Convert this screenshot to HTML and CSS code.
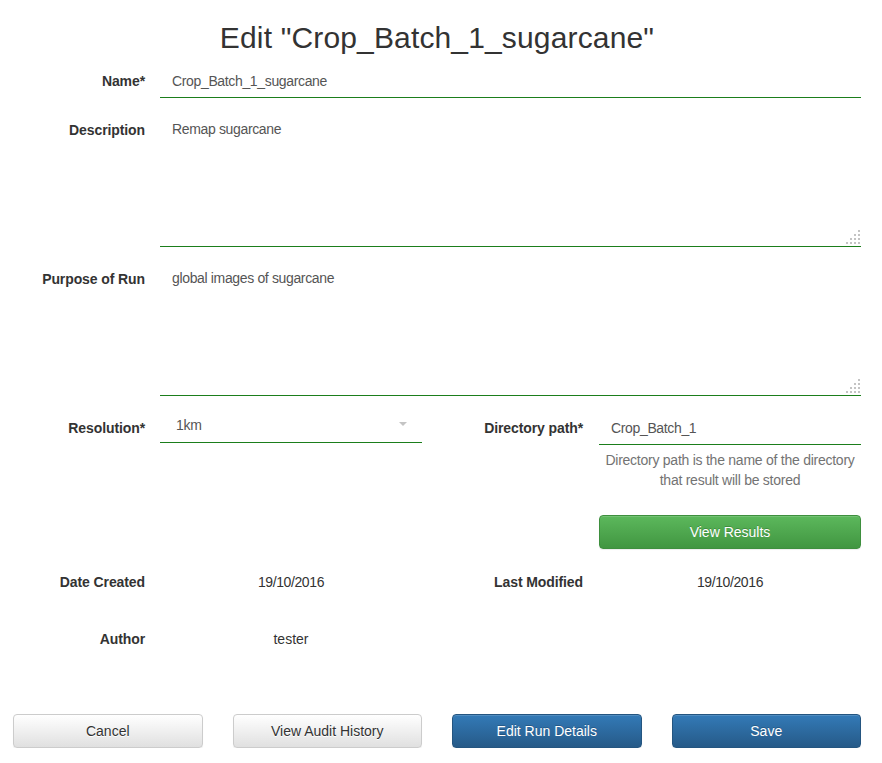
FILE: index.html
```html
<!DOCTYPE html>
<html>
<head>
<meta charset="utf-8">
<link rel="stylesheet" href="styles.css">
</head>
<body>
<div class="page">
  <h1 class="title">Edit "Crop_Batch_1_sugarcane"</h1>
  <form class="form">
    <div class="row full">
      <label class="lbl">Name*</label>
      <input class="field" type="text" value="Crop_Batch_1_sugarcane">
    </div>
    <div class="row full">
      <label class="lbl">Description</label>
      <div class="area-wrap">
        <textarea class="field area" rows="6">Remap sugarcane</textarea>
        <svg class="grip" width="14" height="14" viewBox="0 0 14 14"><rect x="12" y="0" width="2" height="2"/><rect x="8" y="4" width="2" height="2"/><rect x="12" y="4" width="2" height="2"/><rect x="4" y="8" width="2" height="2"/><rect x="8" y="8" width="2" height="2"/><rect x="12" y="8" width="2" height="2"/><rect x="0" y="12" width="2" height="2"/><rect x="4" y="12" width="2" height="2"/><rect x="8" y="12" width="2" height="2"/><rect x="12" y="12" width="2" height="2"/></svg>
      </div>
    </div>
    <div class="row full">
      <label class="lbl">Purpose of Run</label>
      <div class="area-wrap">
        <textarea class="field area" rows="6">global images of sugarcane</textarea>
        <svg class="grip" width="14" height="14" viewBox="0 0 14 14"><rect x="12" y="0" width="2" height="2"/><rect x="8" y="4" width="2" height="2"/><rect x="12" y="4" width="2" height="2"/><rect x="4" y="8" width="2" height="2"/><rect x="8" y="8" width="2" height="2"/><rect x="12" y="8" width="2" height="2"/><rect x="0" y="12" width="2" height="2"/><rect x="4" y="12" width="2" height="2"/><rect x="8" y="12" width="2" height="2"/><rect x="12" y="12" width="2" height="2"/></svg>
      </div>
    </div>
    <div class="row half">
      <label class="lbl">Resolution*</label>
      <div class="select"><span class="select-text">1km</span><span class="caret"></span></div>
      <label class="lbl lbl2">Directory path*</label>
      <div class="stack">
        <input class="field" type="text" value="Crop_Batch_1">
        <p class="help">Directory path is the name of the directory that result will be stored</p>
        <button type="button" class="btn btn-success">View Results</button>
      </div>
    </div>
    <div class="row half info">
      <label class="lbl">Date Created</label>
      <div class="value date">19/10/2016</div>
      <label class="lbl lbl2">Last Modified</label>
      <div class="value date">19/10/2016</div>
    </div>
    <div class="row half info">
      <label class="lbl">Author</label>
      <div class="value">tester</div>
    </div>
  </form>
  <div class="actions">
    <button type="button" class="btn btn-default">Cancel</button>
    <button type="button" class="btn btn-default">View Audit History</button>
    <button type="button" class="btn btn-primary">Edit Run Details</button>
    <button type="button" class="btn btn-primary">Save</button>
  </div>
</div>
</body>
</html>
```
FILE: styles.css
```css
* { box-sizing: border-box; }
html, body { margin: 0; padding: 0; background: #fff; }
body {
  font-family: "Liberation Sans", Arial, sans-serif;
  font-size: 14px;
  line-height: 20px;
  color: #333;
}
.page {
  width: 882px;
  padding: 0 21px 0 13px;
}
.title {
  margin: 21px 0 10px;
  font-size: 30px;
  line-height: 33px;
  font-weight: normal;
  letter-spacing: 0.15px;
  text-align: center;
  color: #333;
}
.form { margin: 0 0 0 -13px; }
.row {
  display: grid;
  margin-bottom: 15px;
}
.full { grid-template-columns: 160px 701px; }
.half { grid-template-columns: 160px 262px 177px 262px; }
.lbl {
  padding: 7px 15px 0 0;
  text-align: right;
  font-weight: bold;
  letter-spacing: -0.1px;
  color: #333;
}
.lbl2 { padding-right: 16px; }
.field {
  display: block;
  width: 100%;
  height: 34px;
  padding: 6px 12px;
  border: none;
  border-bottom: 1px solid #1b7e1b;
  border-radius: 0;
  background: #fff;
  font-family: "Liberation Sans", Arial, sans-serif;
  font-size: 14px;
  line-height: 20px;
  letter-spacing: -0.35px;
  color: #555;
  outline: none;
}
.area-wrap { position: relative; }
.area {
  height: 134px;
  resize: none;
}
.grip {
  position: absolute;
  right: 1px;
  bottom: 3px;
  fill: #c4c4c4;
}
.select {
  display: flex;
  align-items: flex-start;
  height: 32px;
  padding: 4px 15px 0 16px;
  border-bottom: 1px solid #1b7e1b;
  color: #555;
  letter-spacing: -0.3px;
}
.caret {
  margin-left: auto;
  margin-top: 7px;
  width: 0;
  height: 0;
  border-left: 4px solid transparent;
  border-right: 4px solid transparent;
  border-top: 4px solid #c4c4c4;
}
.stack { display: flex; flex-direction: column; }
.help {
  margin: 5px 0 25px;
  text-align: center;
  letter-spacing: -0.25px;
  color: #737373;
}
.info { min-height: 42px; margin-top: 16px; }
.info + .info { margin-top: 0; }
.value {
  padding-top: 7px;
  text-align: center;
  color: #333;
}
.date { letter-spacing: -0.4px; }
.btn {
  display: block;
  height: 34px;
  padding: 6px 12px;
  border: 1px solid transparent;
  border-radius: 4px;
  font-family: "Liberation Sans", Arial, sans-serif;
  font-size: 14px;
  line-height: 20px;
  text-align: center;
  cursor: pointer;
  box-shadow: inset 0 1px 0 rgba(255,255,255,.15), 0 1px 1px rgba(0,0,0,.075);
}
.btn-success {
  width: 100%;
  color: #fff;
  text-shadow: 0 -1px 0 rgba(0,0,0,.2);
  background: linear-gradient(to bottom, #5cb85c 0, #419641 100%);
  border-color: #3e8f3e;
}
.btn-default {
  color: #333;
  text-shadow: 0 1px 0 #fff;
  background: linear-gradient(to bottom, #fff 0, #e0e0e0 100%);
  border-color: #ccc;
}
.btn-primary {
  color: #fff;
  text-shadow: 0 -1px 0 rgba(0,0,0,.2);
  background: linear-gradient(to bottom, #337ab7 0, #265a88 100%);
  border-color: #245580;
}
.actions {
  display: flex;
  gap: 30px;
  margin-top: 50px;
}
.actions .btn { flex: 1 1 0; }
```
